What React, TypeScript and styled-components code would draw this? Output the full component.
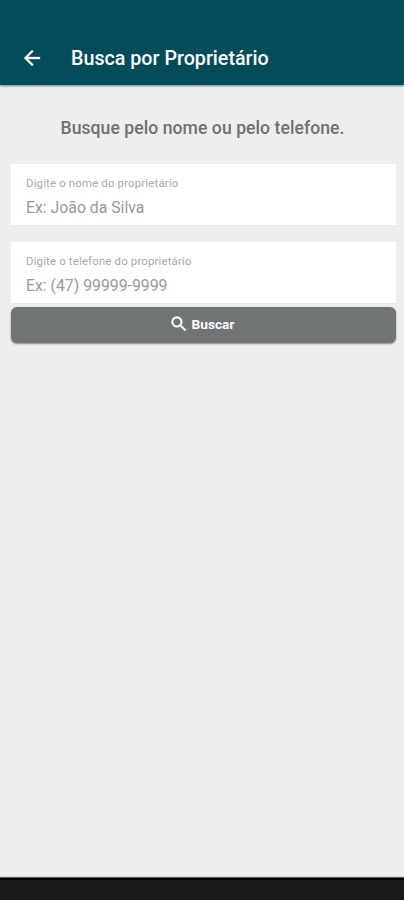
import React from "react";
import styled, { createGlobalStyle } from "styled-components";

const GlobalStyle = createGlobalStyle`
  * { box-sizing: border-box; }
  body { margin: 0; background: #eee; font-family: Roboto, "Liberation Sans", sans-serif; }
`;

const Screen = styled.div`
  display: flex;
  flex-direction: column;
  height: 900px;
  background: #eeeeee;
  overflow: hidden;
`;

const AppBar = styled.header`
  display: flex;
  align-items: center;
  flex: none;
  height: 85px;
  padding: 32px 20px 0;
  gap: 27px;
  background: #034d5b;
  box-shadow: 0 1px 2px rgba(0, 0, 0, 0.5);
`;

const BackButton = styled.button`
  display: flex;
  width: 24px;
  height: 24px;
  margin-bottom: 2px;
  padding: 0;
  border: 0;
  background: none;
  color: #fff;
`;

const Title = styled.h1`
  margin: 0;
  color: #fff;
  font-size: 19.7px;
  font-weight: 500;
  line-height: 24px;
  white-space: nowrap;
`;

const Content = styled.main`
  display: flex;
  flex-direction: column;
  flex: 1;
  padding: 31px 8px 0 11px;
`;

const Prompt = styled.p`
  margin: 0 2px 24px 0;
  color: #707070;
  font-size: 17.6px;
  font-weight: 500;
  letter-spacing: 0.05px;
  line-height: 24px;
  text-align: center;
  white-space: nowrap;
`;

const Fields = styled.div`
  display: flex;
  flex-direction: column;
  gap: 16px;
`;

const Field = styled.label`
  display: flex;
  flex-direction: column;
  height: 62px;
  padding: 12px 15px 0;
  background: #fff;
  border-bottom: 1px solid #e9e9e9;
`;

const FieldLabel = styled.span`
  color: #a8a8a8;
  font-size: 11.4px;
  letter-spacing: 0.17px;
  line-height: 15px;
`;

const FieldInput = styled.input`
  width: 100%;
  height: 22px;
  margin-top: 5px;
  padding: 0;
  border: 0;
  outline: 0;
  background: transparent;
  font-family: inherit;
  font-size: 15.8px;
  &::placeholder { color: #999999; opacity: 1; }
`;

const SearchButton = styled.button`
  display: flex;
  align-items: center;
  justify-content: center;
  gap: 3px;
  height: 36px;
  margin-top: 3px;
  padding: 0 4px 2px 0;
  border: 0;
  border-radius: 6px;
  background: #717475;
  box-shadow: 0 1px 2px rgba(0, 0, 0, 0.45);
  color: #fff;
  font-family: inherit;
  font-size: 13.7px;
  font-weight: 700;
`;

const NavigationBar = styled.footer`
  flex: none;
  height: 22px;
  background: #1a1a1a;
  border-top: 2px solid #030303;
  box-shadow: 0 -1px 1px rgba(0, 0, 0, 0.6);
`;

const fields = [
  { label: "Digite o nome do proprietário", placeholder: "Ex: João da Silva", type: "text" },
  { label: "Digite o telefone do proprietário", placeholder: "Ex: (47) 99999-9999", type: "tel" },
];

export default function App() {
  return (
    <Screen>
      <GlobalStyle />
      <AppBar>
        <BackButton aria-label="Voltar">
          <svg width="24" height="24" viewBox="0 0 24 24" fill="currentColor" stroke="currentColor" strokeWidth="0.3">
            <path d="M20 11H7.83l5.59-5.59L12 4l-8 8 8 8 1.41-1.41L7.83 13H20v-2z" />
          </svg>
        </BackButton>
        <Title>Busca por Proprietário</Title>
      </AppBar>
      <Content>
        <Prompt>Busque pelo nome ou pelo telefone.</Prompt>
        <Fields>
          {fields.map((field) => (
            <Field key={field.type}>
              <FieldLabel>{field.label}</FieldLabel>
              <FieldInput type={field.type} placeholder={field.placeholder} />
            </Field>
          ))}
        </Fields>
        <SearchButton>
          <svg width="20" height="20" viewBox="0 0 24 24" fill="currentColor" stroke="currentColor" strokeWidth="0.5">
            <path d="M15.5 14h-.79l-.28-.27A6.471 6.471 0 0 0 16 9.5 6.5 6.5 0 1 0 9.5 16c1.61 0 3.09-.59 4.23-1.57l.27.28v.79l5 4.99L20.49 19l-4.99-5zm-6 0C7.01 14 5 11.99 5 9.5S7.01 5 9.5 5 14 7.01 14 9.5 11.99 14 9.5 14z" />
          </svg>
          Buscar
        </SearchButton>
      </Content>
      <NavigationBar />
    </Screen>
  );
}
